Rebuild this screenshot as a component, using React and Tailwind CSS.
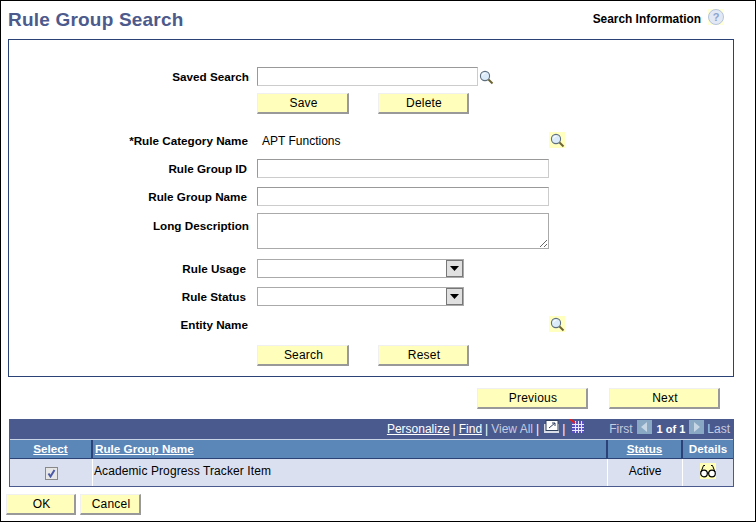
import React from 'react';

function Lookup({ bg = false }) {
  return (
    <span className={`flex h-4 w-4 shrink-0 items-center justify-center ${bg ? 'bg-[#ffffc0]' : ''}`}>
      <svg width="15" height="15" viewBox="0 0 15 15">
        <circle cx="6" cy="6" r="4.6" fill="#dcebfa" stroke="#5f6f7f" strokeWidth="1.1" />
        <path d="M3.5 5.5a3 3 0 0 1 3-2.5" fill="none" stroke="#fff" strokeWidth="1" />
        <path d="M9.5 9.5 13.5 13.5" stroke="#6b6432" strokeWidth="2" />
      </svg>
    </span>
  );
}

function Btn({ children, className = '' }) {
  return (
    <button className={`h-[21px] border border-t-[#f0f0f0] border-l-[#f0f0f0] border-r-2 border-b-2 border-r-[#999999] border-b-[#999999] bg-[#ffffbb] pl-[2px] text-xs text-black tracking-[0.2px] ${className}`}>
      {children}
    </button>
  );
}

function Label({ children, className = '' }) {
  return <label className={`w-[239px] shrink-0 text-right text-[11.7px] font-bold text-black ${className}`}>{children}</label>;
}

function TextInput({ className = '' }) {
  return <input className={`h-[19px] border border-t-[#999999] border-l-[#999999] border-r-[#cccccc] border-b-[#cccccc] bg-white ${className}`} />;
}

function Select() {
  return (
    <div className="flex h-[19px] w-[207px] items-center justify-end border border-[#aaaaaa] bg-white">
      <span className="flex h-[17px] w-[17px] items-center justify-center border border-[#777777] bg-[#e0e0e0]">
        <svg width="9" height="5" viewBox="0 0 9 5"><path d="M0 0h9L4.500 5z" fill="#000" /></svg>
      </span>
    </div>
  );
}

function Sep() {
  return <span className="mx-[3px] text-white">|</span>;
}

function PageArrow({ left }) {
  return (
    <span className="flex h-[14px] w-[15px] items-center justify-center bg-[#88a8c4]">
      <svg width="7" height="10" viewBox="0 0 7 10">
        <path d={left ? 'M6 0v10L0 5z' : 'M1 0v10l6-5z'} fill="#c6d6e4" />
      </svg>
    </span>
  );
}

export default function App() {
  return (
    <div className="flex h-[522px] w-[756px] flex-col overflow-hidden border border-black bg-white font-['Liberation_Sans',Arial,sans-serif]">
      <div className="flex h-[38px] shrink-0 items-center justify-between pl-[7px] pr-[31px]">
        <h1 className="text-[19px] font-bold tracking-[0.2px] text-[#4c5a8c]">Rule Group Search</h1>
        <div className="flex items-center gap-[7px]">
          <span className="text-[11.9px] font-bold text-black">Search Information</span>
          <svg className="mb-[7px]" width="16" height="16" viewBox="0 0 16 16">
            <rect width="16" height="16" fill="#ffffd8" />
            <circle cx="8" cy="8" r="7.500" fill="#e2e8f4" stroke="#b6c4de" />
            <text x="8" y="12" textAnchor="middle" fontSize="11" fontWeight="700" fill="#8ba3cf" fontFamily="Liberation Sans">?</text>
          </svg>
        </div>
      </div>

      <div className="ml-[7px] flex h-[338px] w-[726px] shrink-0 flex-col border border-[#2a4275] pl-[9px] pt-[27px]">
        <div className="flex items-center">
          <Label className="pr-[8px]">Saved Search</Label>
          <TextInput className="w-[221px]" />
          <span className="mt-[2px]"><Lookup /></span>
        </div>
        <div className="mt-[7px] flex gap-[29px] pl-[239px]">
          <Btn className="w-[92px]">Save</Btn>
          <Btn className="w-[91px]">Delete</Btn>
        </div>
        <div className="mt-[19px] flex h-[16px] items-center">
          <Label className="pr-[9px]">*Rule Category Name</Label>
          <span className="ml-[5px] w-[287px] text-xs text-black">APT Functions</span>
          <span className="mb-[2px]"><Lookup bg /></span>
        </div>
        <div className="mt-[10px] flex items-center">
          <Label className="pr-[10px]">Rule Group ID</Label>
          <TextInput className="w-[292px]" />
        </div>
        <div className="mt-[9px] flex items-center">
          <Label className="pr-[10px]">Rule Group Name</Label>
          <TextInput className="w-[292px]" />
        </div>
        <div className="mt-[7px] flex items-start">
          <Label className="pr-[8px] pt-[4px]">Long Description</Label>
          <textarea className="block h-[36px] w-[292px] border border-[#aaaaaa] bg-white" />
        </div>
        <div className="mt-[10px] flex items-center">
          <Label className="pr-[11px]">Rule Usage</Label>
          <Select />
        </div>
        <div className="mt-[9px] flex items-center">
          <Label className="pr-[11px]">Rule Status</Label>
          <Select />
        </div>
        <div className="mt-[11px] flex h-[16px] items-center">
          <Label className="pr-[9px]">Entity Name</Label>
          <span className="w-[292px]" />
          <span className="mb-[2px]"><Lookup bg /></span>
        </div>
        <div className="mt-[12px] flex gap-[29px] pl-[239px]">
          <Btn className="w-[92px]">Search</Btn>
          <Btn className="w-[91px]">Reset</Btn>
        </div>
      </div>

      <div className="mt-[11px] flex shrink-0 gap-[21px] pl-[476px]">
        <Btn className="w-[111px]">Previous</Btn>
        <Btn className="w-[111px]">Next</Btn>
      </div>

      <div className="ml-[8px] mt-[10px] w-[725px] shrink-0 border-x border-b border-[#4a5a8f] text-xs">
        <div className="flex h-[20px] items-center justify-end bg-[#4a5a8f] pr-[3px]">
          <a className="text-white underline">Personalize</a>
          <Sep />
          <a className="text-white underline">Find</a>
          <Sep />
          <span className="text-[#c4cce0]">View All</span>
          <Sep />
          <svg className="mb-[6px] ml-[2px]" width="15" height="13" viewBox="0 0 15 13">
            <rect x="0" y="4" width="15" height="9" fill="#d8dde8" />
            <rect x="2" y="0.500" width="12" height="10" fill="#fff" stroke="#30405f" />
            <path d="M5 8 11 3M8 3h3v3" fill="none" stroke="#30405f" />
          </svg>
          <Sep />
          <svg className="mb-[6px] ml-[2px]" width="14" height="14" viewBox="0 0 14 14">
            <rect x="2" y="2" width="12" height="12" fill="#5a50c0" />
            <path d="M5.500 2v12M8.500 2v12M11.500 2v12M2 5.500h12M2 8.500h12M2 11.500h12" stroke="#e8e8ff" strokeWidth="1" />
            <path d="M0 0 5 4" stroke="#e02020" strokeWidth="2" />
          </svg>
          <span className="ml-[25px] text-[#c4cce0]">First</span>
          <span className="ml-[4px] mb-[4px]"><PageArrow left /></span>
          <span className="ml-[5px] text-[11px] font-bold text-white">1 of 1</span>
          <span className="ml-[4px] mb-[4px]"><PageArrow /></span>
          <span className="ml-[3px] text-[#c4cce0]">Last</span>
        </div>
        <div className="flex h-[20px] border-y border-[#2a4275] border-t-[#c8d4e6] bg-[#5a86b8] text-[11.7px] font-bold text-white">
          <a className="flex w-[83px] items-center justify-center border-r-2 border-[#2a4275] underline">Select</a>
          <a className="flex flex-1 items-center border-r-2 border-[#2a4275] pl-[2px] underline">Rule Group Name</a>
          <a className="flex w-[75px] items-center justify-center border-r-2 border-[#2a4275] underline">Status</a>
          <span className="flex w-[50px] items-center justify-center">Details</span>
        </div>
        <div className="flex h-[27px] bg-[#dbe0f0] text-black">
          <div className="flex w-[83px] items-center justify-center border-r border-white">
            <span className="mt-[1px] flex h-[13px] w-[13px] items-center justify-center border border-[#888888] bg-[#e6e6e6]">
              <svg width="9" height="9" viewBox="0 0 9 9"><path d="M1.500 4.500 3.500 7.500 7.500 1" fill="none" stroke="#4a5aa8" strokeWidth="2" /></svg>
            </span>
          </div>
          <div className="flex flex-1 items-center border-r border-white pl-[1px] pb-[3px] tracking-[0.1px]">Academic Progress Tracker Item</div>
          <div className="flex w-[75px] items-center justify-center border-r border-white pb-[3px]">Active</div>
          <div className="flex w-[50px] items-center justify-center pb-[3px]">
            <svg width="16" height="16" viewBox="0 0 16 16">
              <rect width="16" height="16" fill="#ffffb8" />
              <circle cx="4" cy="10.500" r="3.300" fill="#fff" stroke="#000" strokeWidth="1.200" />
              <circle cx="12" cy="10.500" r="3.300" fill="#fff" stroke="#000" strokeWidth="1.200" />
              <path d="M7 10h2M1 9 3.500 2.500H5M15 9 12.500 2.500H11" fill="none" stroke="#000" />
            </svg>
          </div>
        </div>
      </div>

      <div className="mt-[7px] flex shrink-0 gap-[4px] pl-[5px]">
        <Btn className="w-[70px]">OK</Btn>
        <Btn className="w-[61px]">Cancel</Btn>
      </div>
    </div>
  );
}
